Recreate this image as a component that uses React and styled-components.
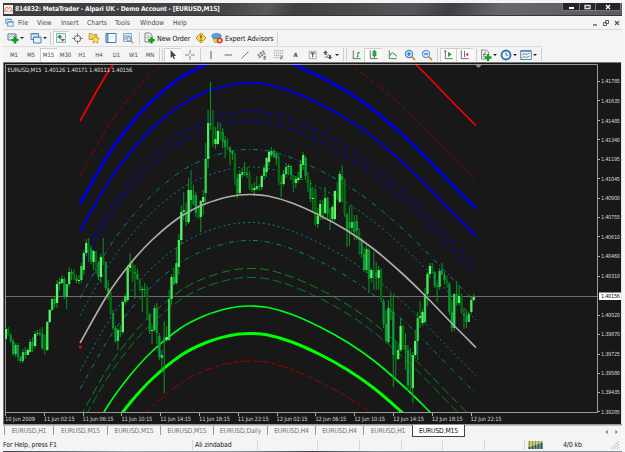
import React from 'react'
import styled, { createGlobalStyle } from 'styled-components'

const GlobalStyle = createGlobalStyle`
  * {
    box-sizing: border-box;
  }
  body {
    margin: 0;
    background: #f6f6f6;
    font-family: "DejaVu Sans Condensed", "DejaVu Sans", sans-serif;
    overflow: hidden;
  }
`

const Window = styled.div`
  width: 619px;
  height: 452px;
  margin-left: 3px;
  padding-top: 3px;
  display: flex;
  flex-direction: column;
  background: #f4f4f4;
  color: #222;
`
const TitleBar = styled.div`
  height: 13px;
  flex: none;
  display: flex;
  align-items: center;
  padding-left: 1px;
  background: linear-gradient(115deg, #3c3d3f 0%, #444547 36%, #57595b 43%, #3f4042 47%, #4a4c4e 58%, #55575a 66%, #3e3f42 72%, #66686b 80%, #5a5c5f 100%);
  border-bottom: 1px solid #343537;
`
const Title = styled.div`
  flex: 1;
  margin-left: 2px;
  font-size: 6.6px;
  font-weight: bold;
  letter-spacing: -0.19px;
  color: #f4f4f4;
  white-space: nowrap;
`
const Controls = styled.div`
  align-self: flex-start;
  display: flex;
  height: 8px;
  margin-right: 1px;
  border: 1px solid #77797b;
  border-top: none;
  border-radius: 0 0 2px 2px;
  background: #242528;
`
const Control = styled.div`
  width: ${(p) => p.$w}px;
  display: flex;
  align-items: center;
  justify-content: center;
  border-left: ${(p) => (p.$first ? 'none' : '1px solid #77797b')};
`
const MenuBar = styled.div`
  height: 14px;
  flex: none;
  display: flex;
  align-items: center;
  padding-left: 2px;
  border-bottom: 1px solid #d9d9d9;
`
const MenuItem = styled.div`
  width: ${(p) => p.$w}px;
  padding-left: 4px;
  font-size: 6.8px;
  color: #4c4c4c;
  white-space: nowrap;
`
const ChildControls = styled.div`
  display: flex;
  gap: 3px;
  margin-left: auto;
  margin-right: 1px;
`
const Toolbar = styled.div`
  height: 16px;
  flex: none;
  width: ${(p) => p.$w}px;
  display: flex;
  align-items: center;
  padding-left: ${(p) => p.$pad || 0}px;
  border-top: ${(p) => (p.$line ? '1px solid #dadada' : 'none')};
`
const Slot = styled.div`
  width: ${(p) => p.$w}px;
  height: 14px;
  flex: none;
  display: flex;
  align-items: center;
  justify-content: center;
  gap: 1px;
  font-size: 6px;
  color: #4c4c4c;
  background: ${(p) => (p.$on ? '#fbfbfb' : 'transparent')};
  box-shadow: ${(p) => (p.$on ? 'inset 1px 1px 0 #cfcfcf' : 'none')};
`
const Label = styled.div`
  width: ${(p) => p.$w}px;
  flex: none;
  padding-left: 1px;
  font-size: 7.1px;
  letter-spacing: -0.1px;
  color: #111;
  white-space: nowrap;
`
const Separator = styled.div`
  width: ${(p) => p.$w}px;
  height: 13px;
  flex: none;
  display: flex;
  justify-content: center;
  gap: 2px;
  &::before {
    content: '';
    border-left: 1px solid #cfcfcf;
  }
  &::after {
    content: '';
    display: ${(p) => (p.$double ? 'block' : 'none')};
    border-left: 1px solid #cfcfcf;
  }
`
const Caret = styled.div`
  border: 2px solid transparent;
  border-top-color: #222;
  border-bottom: none;
`
const ChartSvg = styled.svg`
  display: block;
  flex: none;
  font-family: "DejaVu Sans Condensed", sans-serif;
`
const Tabs = styled.div`
  height: 13px;
  flex: none;
  display: flex;
  padding-left: 1px;
  border-top: 1px solid #c4c4c4;
`
const Tab = styled.div`
  width: ${(p) => p.$w}px;
  height: ${(p) => (p.$active ? 12 : 9)}px;
  margin-top: ${(p) => (p.$active ? -1 : 0)}px;
  display: flex;
  align-items: center;
  justify-content: center;
  font-size: 6.8px;
  letter-spacing: -0.15px;
  color: ${(p) => (p.$active ? '#111' : '#777')};
  background: ${(p) => (p.$active ? '#fff' : 'transparent')};
  border: ${(p) => (p.$active ? '1px solid #444' : 'none')};
  border-left: 1px solid ${(p) => (p.$active ? '#444' : '#999')};
  border-top: none;
  white-space: nowrap;
`
const TabArrows = styled.div`
  display: flex;
  align-items: center;
  gap: 7px;
  margin-left: auto;
  margin-right: 4px;
`
const StatusBar = styled.div`
  height: 13px;
  flex: none;
  display: flex;
  align-items: center;
`
const StatusCell = styled.div`
  width: ${(p) => p.$w}px;
  height: 10px;
  flex: none;
  display: flex;
  align-items: center;
  gap: ${(p) => p.$gap || 0}px;
  padding-left: ${(p) => p.$pad || 0}px;
  border-right: ${(p) => (p.$last ? 'none' : '1px solid #d6d6d6')};
  font-size: 7px;
  letter-spacing: -0.16px;
  color: #222;
  white-space: nowrap;
`
const Desktop = styled.div`
  flex: 1;
  background: linear-gradient(90deg, #3b3f44, #9aa3ac 20%, #8a929a 38%, #3c4045 50%, #82898f 60%, #8b9299);
`

// every glyph is drawn on a 12x12 grid
const glyphs = {
  newChart: (
    <>
      <path d="M1 2h8v6H1z" fill="#eef3f6" stroke="#5b7184" />
      <path d="M2 6l2-2 2 1 2-2" fill="none" stroke="#4a90b8" strokeWidth=".7" />
      <path d="M8 4.5v7M4.5 8h7" stroke="#0b9a1c" strokeWidth="2.6" />
    </>
  ),
  profiles: (
    <>
      <path d="M1 1.5h7.5v6H1z" fill="#dce9f6" stroke="#4c83b5" />
      <path d="M3.5 5h7.5v6H3.5z" fill="#e9f2fa" stroke="#4c83b5" />
      <path d="M1 2h8M4 5.5h7" stroke="#5a97d0" strokeWidth="1.2" />
    </>
  ),
  market: (
    <>
      <path d="M1.5 1.5h9v9h-9z" fill="#e2f3f8" stroke="#86b4c4" />
      <path d="M2 5.5l2.7-3 2.7 3z" fill="#11a02a" />
      <path d="M4 5h1.5v2H4z" fill="#11a02a" />
      <path d="M5.500 7l2.300 2.800L10 7z" fill="#d2402a" />
    </>
  ),
  target: (
    <>
      <circle cx="6" cy="6" r="3.4" fill="none" stroke="#777" strokeWidth="1.1" />
      <path d="M6 0v4M6 8v4M0 6h4M8 6h4" stroke="#777" />
    </>
  ),
  navigator: (
    <>
      <path d="M1 1.5h3l1 1h4v5H1z" fill="#f5d36b" stroke="#bf932b" strokeWidth=".8" />
      <path d="M7.5 3.5l1.2 2.6 2.8.3-2.1 1.9.6 2.9-2.5-1.5-2.5 1.5.6-2.9-2.1-1.9 2.8-.3z" fill="#ffe566" stroke="#b48a1e" strokeWidth=".7" />
    </>
  ),
  terminal: (
    <>
      <path d="M1 1.500h10v9H1z" fill="#fff" stroke="#4479ae" />
      <path d="M1.500 2h2v8h-2z" fill="#5c92c8" />
      <path d="M5 4.5h4M5 6.5h3" stroke="#bcd" strokeWidth=".6" />
    </>
  ),
  tester: (
    <>
      <path d="M1.500 1.500h8v8h-8z" fill="#e6edf6" stroke="#90a6c0" />
      <path d="M3 3v5M5 3v4M7 3v3" stroke="#6888ad" strokeWidth=".8" />
      <circle cx="7" cy="7" r="2.2" fill="#d6e8fb" stroke="#5e86b4" strokeWidth=".9" />
      <path d="M8.700 8.700l2.500 2.500" stroke="#c39a39" strokeWidth="1.4" />
    </>
  ),
  order: (
    <>
      <path d="M2 1h5l2 2v7H2z" fill="#f3f3f3" stroke="#777" strokeWidth=".9" />
      <path d="M3.500 4h4M3.500 6h3" stroke="#888" strokeWidth=".7" />
      <path d="M8.500 5v6.500M5.200 8.300h6.600" stroke="#13a022" strokeWidth="2.4" />
    </>
  ),
  meta: (
    <>
      <path d="M6 1L11 6 6 11 1 6z" fill="#fbd84c" stroke="#bd8d1c" />
      <path d="M6 3v3.500M6 7.500v1.500" stroke="#6b4600" strokeWidth="1.3" />
    </>
  ),
  expert: (
    <>
      <path d="M2 6h7l-1 4.500H3.500z" fill="#f0c65a" stroke="#a9842b" strokeWidth=".6" />
      <ellipse cx="5.500" cy="4" rx="4.800" ry="2.600" fill="#5b9dd6" stroke="#3b77ad" strokeWidth=".6" />
      <circle cx="8.700" cy="8.500" r="3" fill="#e33d1e" />
      <path d="M7.600 7.400h2.200v2.200H7.600z" fill="#fff" />
    </>
  ),
  cursor: <path d="M4 1v9l2-2 1.500 3.200 1.300-.6L7.400 7.500H10z" fill="#444" />,
  cross: <path d="M6 1v4M6 7v4M1 6h4M7 6h4" stroke="#888" />,
  vline: <path d="M6 2v8" stroke="#555" />,
  hline: <path d="M2.500 6h7.500" stroke="#666" />,
  trend: <path d="M2.500 9.500l7-7" stroke="#777" />,
  channel: (
    <>
      <path d="M1.500 7.500L9 1.500M2.500 10L10 4M2 5.500l3 4M4.500 3.500l3 4M7 2l3 4" stroke="#666" strokeWidth=".9" />
      <path d="M11 8H8.700v3H11M8.700 9.500h2" fill="none" stroke="#555" strokeWidth=".8" />
    </>
  ),
  fibo: (
    <>
      <path d="M1 2h10M1 4.500h10M1 7h10M1 9.500h6" stroke="#888" strokeWidth=".8" strokeDasharray="1.500 .7" />
      <path d="M8.500 11.500V8.500h2.500M8.500 10h2" fill="none" stroke="#555" strokeWidth=".8" />
    </>
  ),
  label: (
    <>
      <path d="M2.500 2.500h7.500v8H2.500z" fill="#f7f7f7" stroke="#888" strokeDasharray="1.500 .6" />
      <path d="M4 4.500h4.500M6.200 4.500v4.500" stroke="#444" strokeWidth="1.100" />
    </>
  ),
  arrows: (
    <>
      <path d="M1 4L3.500 1.500 6 4H4.500v2h-2V4z" fill="#555" />
      <path d="M5.500 8L8 10.500 10.500 8H9V6H7v2z" fill="#555" />
      <path d="M3 7.500l1.500 1.500 2-3.500" fill="none" stroke="#666" />
    </>
  ),
  bars: (
    <>
      <path d="M2.500 1.500v9h8M1.500 9.500l1 1" fill="none" stroke="#666" />
      <path d="M6 8.500h1.500V3.500M7.500 4h2" fill="none" stroke="#1ba52e" strokeWidth="1.200" />
    </>
  ),
  candles: (
    <>
      <path d="M2.500 1.500v9h8" fill="none" stroke="#666" />
      <path d="M7 1v9" stroke="#13802a" />
      <path d="M5.300 2.500h3.500v5H5.300z" fill="#22bb36" stroke="#13802a" strokeWidth=".6" />
    </>
  ),
  line: (
    <>
      <path d="M2.500 1.500v9h8" fill="none" stroke="#666" />
      <path d="M3 7.500C5 3 7 3.500 10.500 8" fill="none" stroke="#2ba83c" strokeWidth="1.100" />
    </>
  ),
  zoomIn: (
    <>
      <path d="M7 7l4 4" stroke="#c79b33" strokeWidth="2" />
      <circle cx="5" cy="5" r="3.600" fill="#d5eafc" stroke="#4a8ac4" strokeWidth="1.200" />
      <path d="M5 3v4M3 5h4" stroke="#2b6cab" strokeWidth="1.200" />
    </>
  ),
  zoomOut: (
    <>
      <path d="M7 7l4 4" stroke="#c79b33" strokeWidth="2" />
      <circle cx="5" cy="5" r="3.600" fill="#d5eafc" stroke="#6a9cca" strokeWidth="1.200" />
      <path d="M3 5h4" stroke="#2b6cab" strokeWidth="1.200" />
    </>
  ),
  scroll: (
    <>
      <path d="M2.500 1.500v9h8M1.500 3l1-1.500 1 1.500" fill="none" stroke="#666" />
      <path d="M5.500 3l4 2.800-4 2.800z" fill="#1ba52e" />
    </>
  ),
  shift: (
    <>
      <path d="M2.500 1.500v9h8M6 2v7" fill="none" stroke="#666" />
      <path d="M7 6l3-2.200v4.400z" fill="#c9402c" />
    </>
  ),
  indicators: (
    <>
      <path d="M1.500 1h5l2 2v7h-7z" fill="#eee" stroke="#888" strokeWidth=".9" />
      <path d="M3 8c1-1 1-5 3-5M3 5.500h3" fill="none" stroke="#666" strokeWidth=".8" />
      <path d="M8 5v7M4.500 8.500h7" stroke="#13a022" strokeWidth="2.300" />
    </>
  ),
  clock: (
    <>
      <circle cx="6" cy="6" r="4.500" fill="#e8f3fd" stroke="#2f74b5" strokeWidth="1.900" />
      <path d="M6 3.500V6l1.800.8" fill="none" stroke="#444" strokeWidth=".8" />
    </>
  ),
  template: (
    <>
      <path d="M.7 1.500h10.600v9H.7z" fill="#eef5fb" stroke="#5186b8" />
      <path d="M1 2.200h10" stroke="#5a97d0" strokeWidth="1.500" />
      <path d="M2 6l2-1.500 2 1 3.500-1.500" fill="none" stroke="#a54" strokeWidth=".8" />
      <path d="M2 9l2-1.500 2 1 3.500-1.500" fill="none" stroke="#2a9a3a" strokeWidth=".8" />
    </>
  ),
}

const Icon = ({ name, size = 12 }) => (
  <svg width={size} height={size} viewBox="0 0 12 12">
    {glyphs[name]}
  </svg>
)

// [high, low, open, close] in chart pixels, one entry per M15 bar
const bars = [
  [328, 340, 339, 329], [327, 336, 329, 335], [333, 343, 335, 341], [339, 356, 341, 354],
  [343, 357, 354, 345], [343, 361, 345, 357], [356, 363, 357, 361], [349, 363, 361, 352],
  [347, 359, 352, 355], [348, 355, 355, 350], [339, 353, 352, 342], [337, 352, 342, 346],
  [331, 349, 346, 334], [330, 336, 334, 333], [329, 336, 333, 334], [327, 350, 334, 348],
  [334, 355, 338, 350], [321, 351, 350, 322], [309, 323, 322, 310], [298, 311, 310, 299],
  [296, 308, 299, 304], [280, 308, 303, 284], [278, 291, 284, 282], [275, 284, 283, 279],
  [277, 299, 279, 297], [284, 309, 297, 284], [267, 287, 284, 272], [269, 280, 272, 274],
  [270, 280, 274, 278], [275, 283, 278, 281], [275, 284, 281, 280], [263, 283, 280, 266],
  [250, 275, 270, 253], [239, 256, 253, 243], [238, 262, 243, 249], [246, 264, 249, 261],
  [250, 270, 262, 251], [251, 274, 251, 263], [261, 280, 263, 277], [254, 283, 277, 257],
  [238, 265, 257, 262], [261, 290, 262, 288], [280, 300, 288, 292], [292, 315, 292, 313],
  [310, 330, 313, 328], [326, 343, 328, 341], [328, 350, 341, 330], [325, 337, 330, 332],
  [300, 334, 332, 302], [294, 305, 302, 296], [265, 302, 300, 268], [253, 272, 268, 264],
  [262, 282, 264, 280], [265, 299, 272, 274], [269, 280, 274, 279], [279, 292, 279, 290],
  [286, 312, 290, 289], [283, 296, 289, 290], [286, 320, 290, 315], [313, 334, 315, 331],
  [325, 344, 331, 330], [305, 332, 330, 308], [303, 344, 308, 333], [333, 360, 336, 357],
  [350, 371, 358, 355], [321, 393, 337, 339], [326, 342, 340, 337], [290, 341, 340, 299],
  [274, 305, 299, 277], [268, 285, 277, 284], [247, 285, 283, 263], [234, 275, 267, 240],
  [205, 245, 240, 212], [192, 220, 212, 210], [203, 226, 213, 222], [178, 224, 222, 190],
  [170, 213, 200, 190], [185, 206, 195, 204], [192, 217, 195, 213], [205, 219, 213, 217],
  [200, 232, 217, 201], [190, 215, 202, 197], [143, 203, 193, 159], [110, 168, 159, 123],
  [82, 130, 123, 125], [110, 147, 126, 144], [127, 149, 144, 139], [122, 145, 144, 131],
  [123, 140, 131, 136], [128, 148, 132, 142], [136, 158, 140, 147], [138, 150, 147, 148],
  [146, 165, 148, 152], [150, 160, 151, 154], [153, 185, 153, 178], [174, 198, 178, 193],
  [170, 195, 193, 174], [168, 178, 175, 172], [162, 176, 172, 173], [167, 178, 173, 175],
  [171, 190, 175, 188], [184, 192, 188, 190], [182, 196, 190, 188], [176, 191, 189, 186],
  [184, 191, 186, 187], [175, 190, 187, 176], [165, 180, 176, 168], [157, 177, 172, 158],
  [150, 166, 162, 152], [147, 157, 155, 151], [149, 158, 151, 157], [151, 165, 154, 159],
  [155, 185, 157, 182], [175, 197, 182, 184], [170, 186, 184, 174], [163, 178, 174, 167],
  [164, 175, 167, 166], [165, 180, 166, 175], [175, 192, 176, 183], [176, 188, 183, 179],
  [172, 183, 180, 178], [160, 180, 178, 164], [152, 170, 165, 155], [156, 180, 158, 176],
  [172, 192, 176, 188], [180, 202, 188, 199], [187, 211, 199, 198], [188, 226, 190, 224],
  [208, 228, 224, 216], [200, 220, 216, 204], [200, 220, 204, 216], [187, 214, 213, 198],
  [197, 218, 198, 214], [208, 230, 214, 219], [205, 221, 219, 207], [190, 221, 219, 191],
  [182, 200, 191, 198], [171, 203, 202, 174], [165, 202, 176, 180], [179, 217, 180, 214],
  [213, 247, 214, 230], [206, 246, 222, 228], [205, 232, 228, 222], [215, 240, 222, 232],
  [215, 240, 221, 231], [228, 255, 232, 240], [238, 258, 240, 254], [247, 272, 254, 270],
  [245, 273, 270, 249], [248, 293, 250, 279], [268, 283, 278, 270], [252, 290, 270, 272],
  [262, 290, 272, 277], [266, 290, 278, 270], [268, 302, 270, 300], [299, 328, 301, 324],
  [310, 343, 324, 341], [300, 344, 342, 308], [293, 320, 311, 312], [295, 387, 312, 355],
  [340, 379, 355, 359], [345, 360, 359, 350], [318, 352, 350, 326], [325, 350, 326, 347],
  [333, 370, 345, 350], [345, 391, 350, 385], [348, 392, 385, 388], [352, 403, 388, 355],
  [330, 358, 355, 341], [312, 360, 341, 318], [301, 328, 318, 316], [309, 326, 323, 312],
  [288, 324, 322, 294], [272, 306, 294, 274], [263, 278, 274, 266], [263, 274, 266, 271],
  [271, 288, 272, 286], [282, 302, 286, 286], [268, 290, 287, 271], [263, 275, 270, 275],
  [272, 284, 275, 280], [276, 288, 280, 284], [282, 315, 284, 312], [300, 332, 312, 328],
  [293, 331, 328, 294], [281, 306, 294, 303], [285, 305, 303, 296], [294, 314, 296, 312],
  [308, 329, 313, 316], [310, 328, 316, 322], [312, 322, 322, 314], [297, 314, 312, 300],
  [294, 301, 300, 297],
]

// middle of the regression channel, every band is this curve moved up or down
const middle = [
  [80, 343], [108, 294], [130, 264], [152, 240], [180, 217], [205, 204], [230, 196.500],
  [249, 194.500], [268, 196], [292, 203], [320, 215.500], [347, 230.500], [373, 248.500],
  [400, 271.500], [423, 293.500], [453, 324.500], [476, 347.500],
]

const bands = [
  { dy: -222, color: '#f80000', width: 1.700 },
  { dy: -167, color: '#8c0000', width: 1, dash: '10 3 5 3' },
  { dy: -139, color: '#0000e0', width: 3 },
  { dy: -111.500, color: '#0000e0', width: 2 },
  { dy: -83, color: '#0000d0', width: 1, dash: '8 4' },
  { dy: -74, color: '#0000d0', width: 1, dash: '8 4' },
  { dy: -45, color: '#00857c', width: 1, dash: '5 3 1 3' },
  { dy: -27.500, color: '#00857c', width: 1, dash: '2 3' },
  { dy: 28, color: '#00857c', width: 1, dash: '2 3' },
  { dy: 46, color: '#00857c', width: 1, dash: '5 3 1 3' },
  { dy: 74, color: '#068a16', width: 1, dash: '9 4' },
  { dy: 83, color: '#067a2a', width: 1, dash: '9 4' },
  { dy: 111.500, color: '#00fa1a', width: 1.700 },
  { dy: 139, color: '#00ff00', width: 3 },
  { dy: 166.500, color: '#a00000', width: 1, dash: '9 3 4 3' },
]

const curve = (dy) => {
  const p = middle
  let d = `M${p[0][0]} ${p[0][1] + dy}`
  for (let i = 0; i < p.length - 1; i++) {
    const a = p[i - 1] || p[i]
    const b = p[i]
    const c = p[i + 1]
    const e = p[i + 2] || c
    d += `C${b[0] + (c[0] - a[0]) / 6} ${b[1] + dy + (c[1] - a[1]) / 6} ${c[0] - (e[0] - b[0]) / 6} ${c[1] + dy - (e[1] - b[1]) / 6} ${c[0]} ${c[1] + dy}`
  }
  return d
}

const prices = [
  ['1.41785', 80.500], ['1.41635', 100.300], ['1.41485', 120.300], ['1.41340', 139.300],
  ['1.41195', 159], ['1.41045', 178.300], ['1.40900', 197.500], ['1.40755', 217],
  ['1.40610', 236.300], ['1.40460', 256], ['1.40310', 275.500], ['1.40020', 314.500],
  ['1.39870', 334], ['1.39725', 353.500], ['1.39580', 372.500], ['1.39435', 392],
  ['1.39285', 411.300],
]

const times = [
  '10 Jun 2009', '11 Jun 02:15', '11 Jun 06:15', '11 Jun 10:15', '11 Jun 14:15',
  '11 Jun 18:15', '11 Jun 22:15', '12 Jun 02:15', '12 Jun 06:15', '12 Jun 10:15',
  '12 Jun 14:15', '12 Jun 18:15', '12 Jun 22:15',
]

const bullColors = ['#5cf66a', '#2fd64c', '#45ee55']
const bearColors = ['#0a9c3a', '#006e0a', '#0b8f30']

const Chart = () => (
  <ChartSvg width="619" height="363" viewBox="3 62 619 363">
    <defs>
      <clipPath id="plot">
        <path d="M5 65h592v347H5z" />
      </clipPath>
    </defs>
    <path d="M3 62h619v363H3z" fill="#181818" />
    <path d="M3 62.500h619M3.500 62v363" stroke="#777" fill="none" />
    <path d="M621.500 62v363" stroke="#e4e4e4" />
    <path d="M3 424.500h619" stroke="#999" />
    <path d="M5.500 412V64.500H597.500V412.500H5" stroke="#9a9a9a" fill="none" />

    <g clipPath="url(#plot)">
      {bands.map((b) => (
        <path key={b.dy} d={curve(b.dy)} fill="none" stroke={b.color} strokeWidth={b.width} strokeDasharray={b.dash} />
      ))}
      <path d="M6 296.500h591" stroke="#6d6d6d" />
      {bars.map(([high, low, open, close], i) => {
        const x = 4.700 + i * 2.437
        const up = close < open
        return (
          <g key={i}>
            <path d={`M${x + 1.1} ${high}V${low}`} stroke={i % 3 === 1 ? '#0c8038' : '#0b9214'} strokeWidth="1.100" />
            <rect
              x={x}
              y={Math.min(open, close)}
              width="2.300"
              height={Math.max(1, Math.abs(open - close))}
              fill={up ? bullColors[i % 3] : bearColors[i % 3]}
            />
          </g>
        )
      })}
      <path d={curve(0)} fill="none" stroke="#b0aca8" strokeWidth="1.700" />
      <circle cx="80.300" cy="347" r="1.500" fill="#f00" />
    </g>
    <path d="M475.500 65h6l-3 3z" fill="#8090a0" />

    <text x="7.500" y="72" fontSize="6" fill="#ddd" textLength="125" xmlSpace="preserve">
      {'EURUSD,M15  1.40126 1.40171 1.40111 1.40156'}
    </text>
    {prices.map(([label, y]) => (
      <g key={label}>
        <path d={`M597 ${Math.round(y) + 0.5}h3`} stroke="#aaa" />
        <text x="601" y={y + 2.200} fontSize="5.600" fill="#d2d2d2" textLength="19">{label}</text>
      </g>
    ))}
    <path d="M599 292.500h22v7.500h-22z" fill="#fff" />
    <text x="601" y="298.400" fontSize="5.600" fill="#111" textLength="19">1.40156</text>
    {times.map((label, i) => (
      <g key={label}>
        <path d={`M${Math.round(5 + i * 38.800) + 0.5} 413v3`} stroke="#aaa" />
        <text x={5 + i * 38.800} y="420.800" fontSize="5.800" fill="#d2d2d2" textLength={i ? 31 : 30}>{label}</text>
      </g>
    ))}
  </ChartSvg>
)

const App = () => {
  return (
    <>
      <GlobalStyle />
      <Window>
        <TitleBar>
          <svg width="9" height="9" viewBox="0 0 9 9">
            <path d="M0 0h9v9H0z" fill="#f5e9e2" />
            <path d="M1 7V4l2-2 1.500 2L6 2l2 2v3M3 7V5M6 7V5" fill="none" stroke="#d8836c" />
          </svg>
          <Title>814832: MetaTrader - Alpari UK - Demo Account - [EURUSD,M15]</Title>
          <Controls>
            <Control $w={16} $first>
              <svg width="7" height="6"><path d="M1 3h5v2H1z" fill="#fff" /></svg>
            </Control>
            <Control $w={16}>
              <svg width="7" height="6"><path d="M1 1.500h5v3H1z" fill="none" stroke="#ddd" strokeWidth="1.400" /></svg>
            </Control>
            <Control $w={25}>
              <svg width="6" height="6"><path d="M1 1l4 4M5 1L1 5" stroke="#fff" strokeWidth="1.400" /></svg>
            </Control>
          </Controls>
        </TitleBar>

        <MenuBar>
          <Icon name="profiles" size={9} />
          <MenuItem $w={19}>File</MenuItem>
          <MenuItem $w={24}>View</MenuItem>
          <MenuItem $w={26}>Insert</MenuItem>
          <MenuItem $w={28}>Charts</MenuItem>
          <MenuItem $w={25}>Tools</MenuItem>
          <MenuItem $w={33}>Window</MenuItem>
          <MenuItem $w={24}>Help</MenuItem>
          <ChildControls>
            <svg width="8" height="8"><path d="M2 6h4" stroke="#555" strokeWidth="1.300" /></svg>
            <svg width="8" height="8"><path d="M3.500 1.500h3v3h-3zM1.500 3.500h3v3h-3z" fill="#eee" stroke="#555" strokeWidth=".9" /></svg>
            <svg width="8" height="8"><path d="M2 2l4 4M6 2L2 6" stroke="#555" strokeWidth="1.200" /></svg>
          </ChildControls>
        </MenuBar>

        <Toolbar $w={619}>
          <Slot $w={25}><Icon name="newChart" /><Caret /></Slot>
          <Slot $w={20}><Icon name="profiles" /><Caret /></Slot>
          <Separator $w={5} />
          <Slot $w={16} $on><Icon name="market" /></Slot>
          <Slot $w={17}><Icon name="target" size={11} /></Slot>
          <Slot $w={16}><Icon name="navigator" /></Slot>
          <Slot $w={17}><Icon name="terminal" /></Slot>
          <Slot $w={17}><Icon name="tester" /></Slot>
          <Separator $w={6} />
          <Slot $w={14}><Icon name="order" /></Slot>
          <Label $w={36}>New Order</Label>
          <Slot $w={18}><Icon name="meta" /></Slot>
          <Slot $w={14}><Icon name="expert" /></Slot>
          <Label $w={50}>Expert Advisors</Label>
          <Separator $w={6} />
        </Toolbar>

        <Toolbar $w={539} $pad={3} $line>
          <Slot $w={16}>M1</Slot>
          <Slot $w={18}>M5</Slot>
          <Slot $w={17} $on>M15</Slot>
          <Slot $w={17}>M30</Slot>
          <Slot $w={16}>H1</Slot>
          <Slot $w={18}>H4</Slot>
          <Slot $w={17}>D1</Slot>
          <Slot $w={17}>W1</Slot>
          <Slot $w={16}>MN</Slot>
          <Separator $w={6} $double />
          <Slot $w={17} $on><Icon name="cursor" size={11} /></Slot>
          <Slot $w={17}><Icon name="cross" /></Slot>
          <Separator $w={5} />
          <Slot $w={16}><Icon name="vline" /></Slot>
          <Slot $w={17}><Icon name="hline" /></Slot>
          <Slot $w={17}><Icon name="trend" /></Slot>
          <Slot $w={17}><Icon name="channel" size={11} /></Slot>
          <Slot $w={17}><Icon name="fibo" size={11} /></Slot>
          <Slot $w={17}><b>A</b></Slot>
          <Slot $w={16}><Icon name="label" size={11} /></Slot>
          <Slot $w={21}><Icon name="arrows" /><Caret /></Slot>
          <Separator $w={7} $double />
          <Slot $w={16}><Icon name="bars" size={11} /></Slot>
          <Slot $w={18} $on><Icon name="candles" size={11} /></Slot>
          <Slot $w={20}><Icon name="line" size={11} /></Slot>
          <Slot $w={16}><Icon name="zoomIn" /></Slot>
          <Slot $w={17}><Icon name="zoomOut" /></Slot>
          <Separator $w={5} />
          <Slot $w={16} $on><Icon name="scroll" size={11} /></Slot>
          <Slot $w={17} $on><Icon name="shift" size={11} /></Slot>
          <Separator $w={6} />
          <Slot $w={19}><Icon name="indicators" /><Caret /></Slot>
          <Slot $w={20}><Icon name="clock" /><Caret /></Slot>
          <Slot $w={20}><Icon name="template" /><Caret /></Slot>
          <Separator $w={6} />
        </Toolbar>

        <Chart />

        <Tabs>
          <Tab $w={49}>EURUSD,H1</Tab>
          <Tab $w={54}>EURUSD,M15</Tab>
          <Tab $w={53}>EURUSD,M15</Tab>
          <Tab $w={53}>EURUSD,M15</Tab>
          <Tab $w={54}>EURUSD,Daily</Tab>
          <Tab $w={48}>EURUSD,H4</Tab>
          <Tab $w={48}>EURUSD,H4</Tab>
          <Tab $w={49}>EURUSD,H1</Tab>
          <Tab $w={53} $active>EURUSD,M15</Tab>
          <TabArrows>
            <svg width="3" height="4"><path d="M2.500 0v4L.5 2z" fill="#666" /></svg>
            <svg width="3" height="4"><path d="M.5 0v4l2-2z" fill="#666" /></svg>
          </TabArrows>
        </Tabs>

        <StatusBar>
          <StatusCell $w={190}>For Help, press F1</StatusCell>
          <StatusCell $w={65} $pad={2}>Ali zindabad</StatusCell>
          <StatusCell $w={60} />
          <StatusCell $w={42} />
          <StatusCell $w={42} />
          <StatusCell $w={41} />
          <StatusCell $w={42} />
          <StatusCell $w={40} />
          <StatusCell $w={85} $pad={3} $gap={20} $last>
            <svg width="15" height="8">
              <path d="M1.500 0v8M4.500 0v8M7.500 0v8M10.500 0v8M13.500 0v8" stroke="#9a9a20" strokeWidth="2" />
              <path d="M1.500 6v2M4.500 5v3M7.500 4v4M10.500 3v5M13.500 2v6" stroke="#1d5a6c" strokeWidth="2" />
            </svg>
            4/0 kb
          </StatusCell>
          <svg width="9" height="9"><path d="M1 9l8-8M4 9l5-5M7 9l2-2" stroke="#bbb" /></svg>
        </StatusBar>
        <Desktop />
      </Window>
    </>
  )
}

export default App
